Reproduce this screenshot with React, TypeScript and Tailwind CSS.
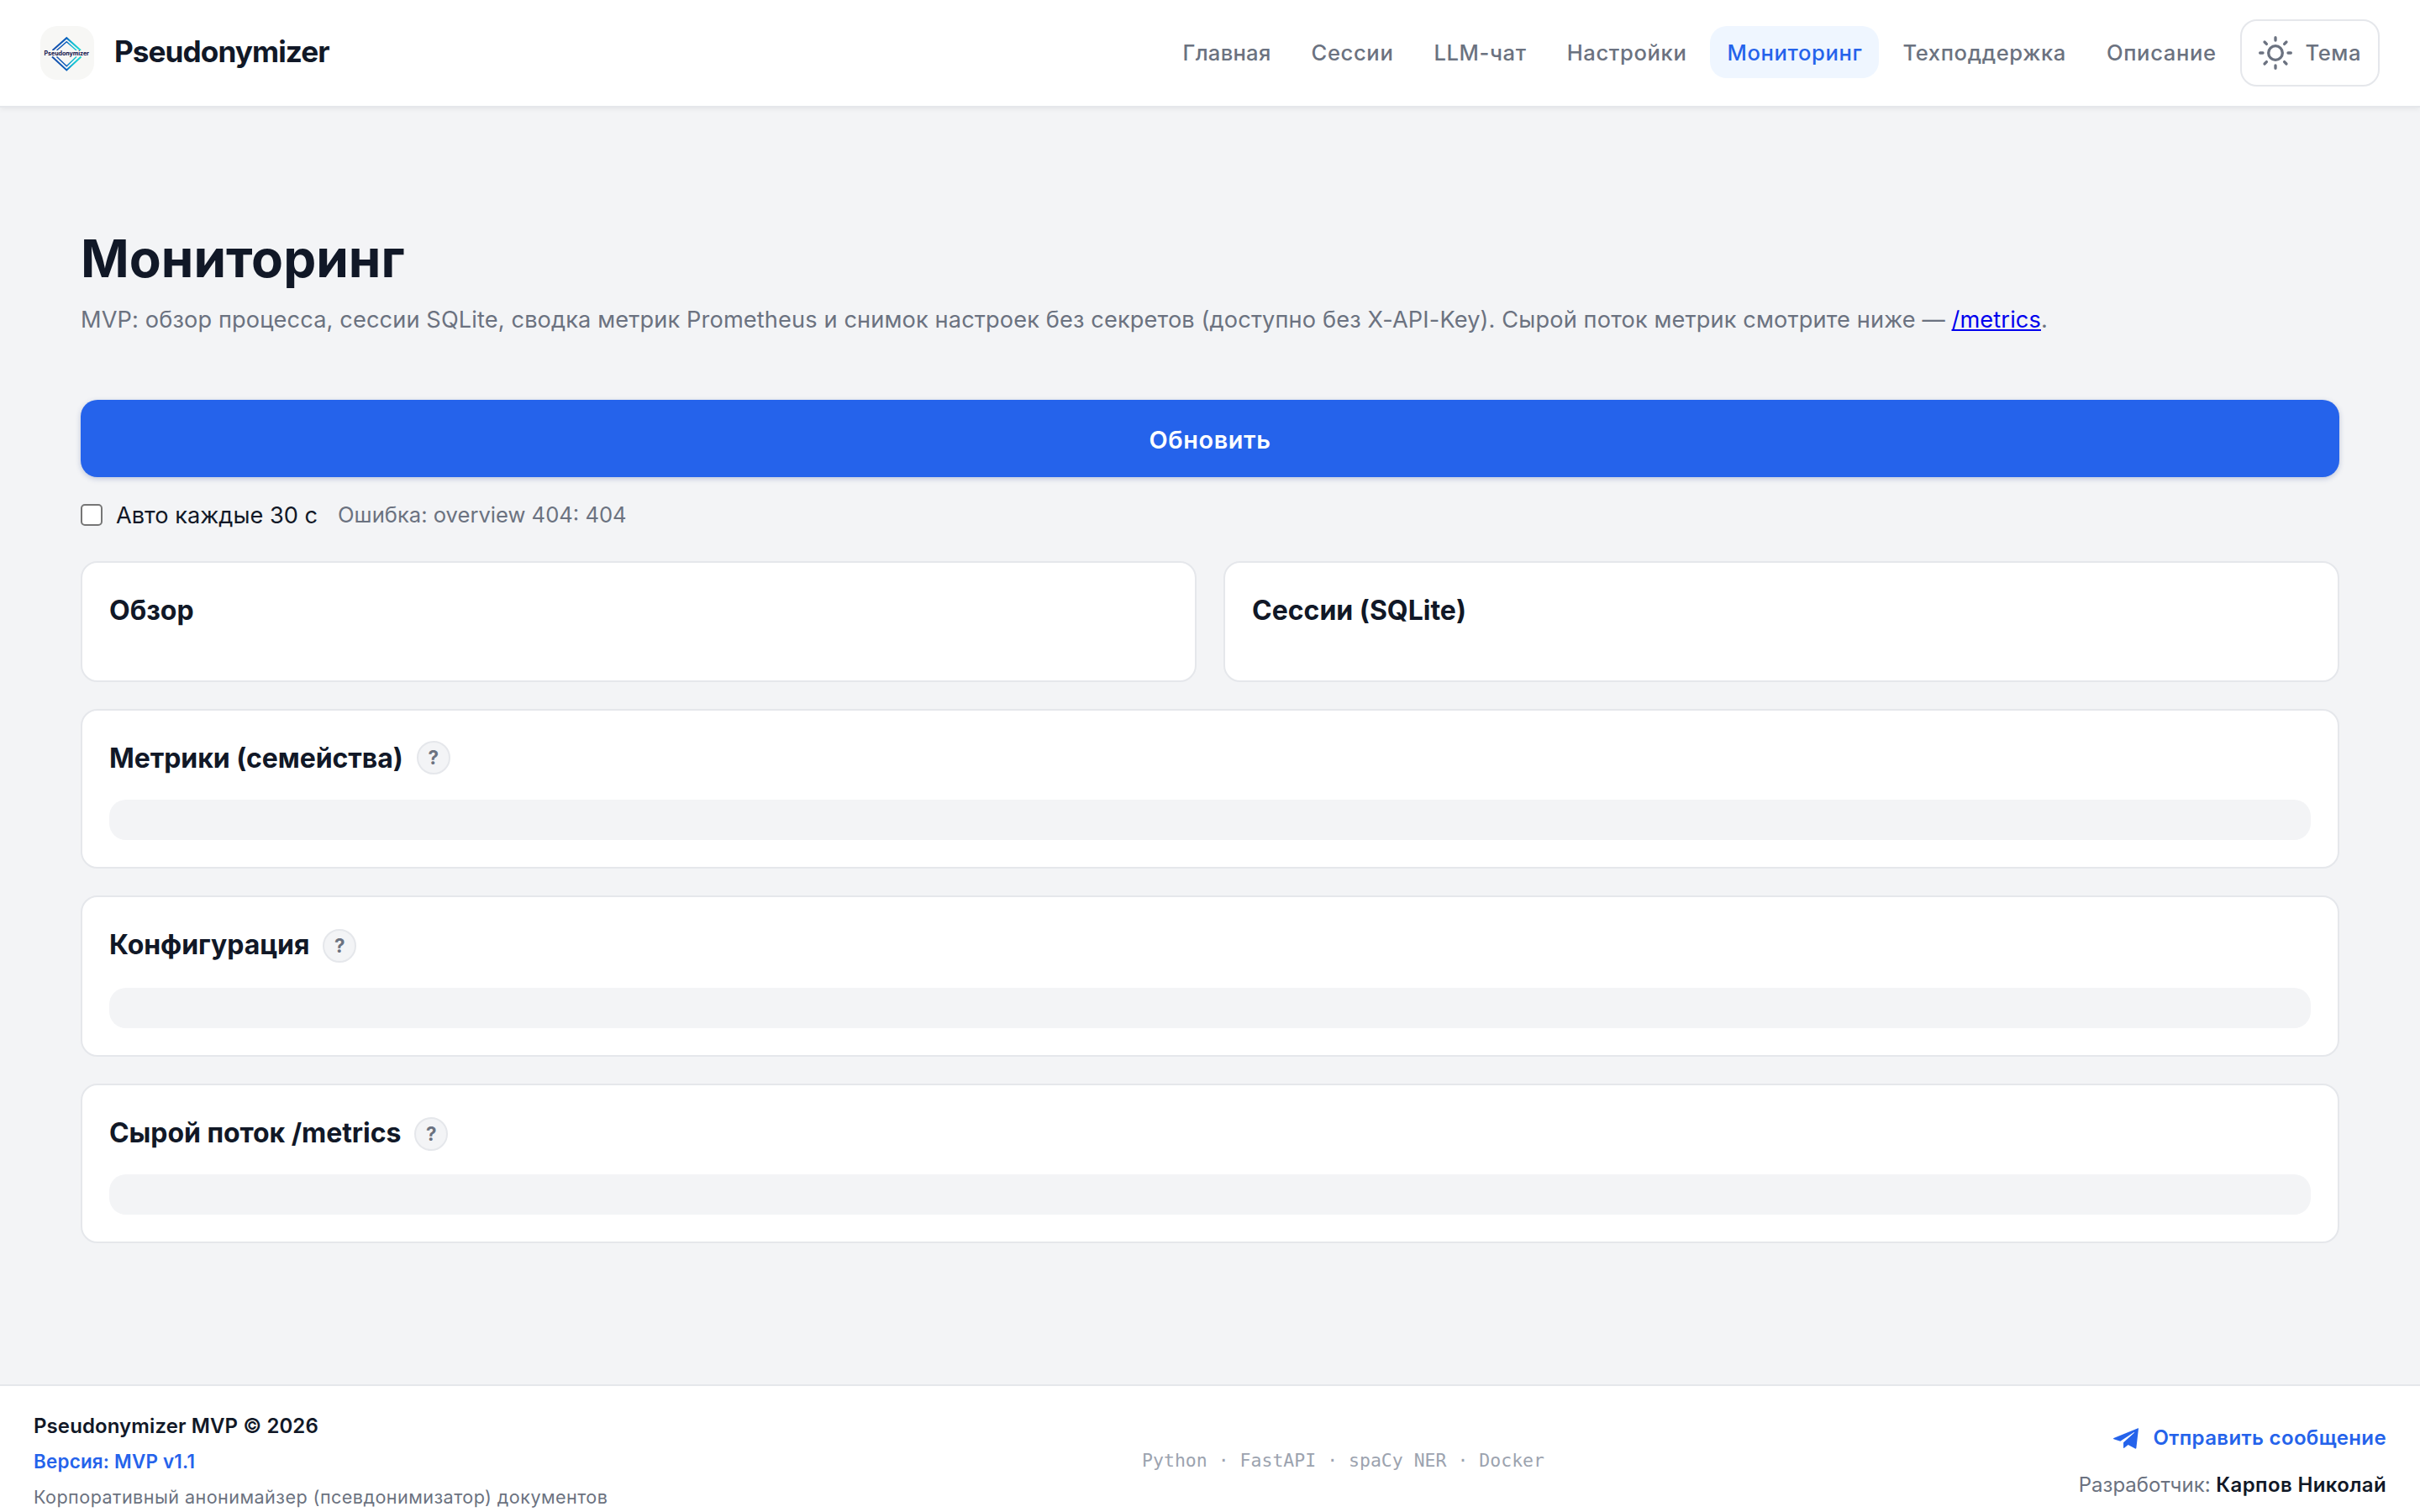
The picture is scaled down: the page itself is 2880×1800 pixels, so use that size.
import React from 'react';

interface NavItem {
  label: string;
  className?: string;
}

const NAV_ITEMS: NavItem[] = [
  { label: 'Главная', className: 'tracking-[0.01em]' },
  { label: 'Сессии' },
  { label: 'LLM-чат' },
  { label: 'Настройки' },
  { label: 'Мониторинг', className: 'rounded-[20px] bg-[#eff6ff] text-[#2563eb]' },
  { label: 'Техподдержка' },
  { label: 'Описание' },
];

function Logo() {
  return (
    <svg viewBox="0 0 64 64" className="w-16 h-16 rounded-[20px]">
      <defs>
        <linearGradient id="edge" x1="10" y1="0" x2="52" y2="0" gradientUnits="userSpaceOnUse">
          <stop offset="0" stopColor="#1d4fa8" />
          <stop offset="0.5" stopColor="#0b5cbc" />
          <stop offset="0.65" stopColor="#14b8d4" />
          <stop offset="1" stopColor="#1fe5cf" />
        </linearGradient>
      </defs>
      <rect width="64" height="64" fill="#f7f7f5" />
      <g fill="none" stroke="url(#edge)" strokeWidth="2">
        <path d="M14.5 29 31.3 14.2 48 29" />
        <path d="M19.5 29 31.3 18.8 43 29" strokeWidth="1.5" />
        <path d="M14 36.5 31.3 52.5 48.5 36.5" />
        <path d="M19.5 36.5 31.3 47.8 43 36.5" strokeWidth="1.5" />
      </g>
      <rect x="4" y="29" width="56" height="6.5" fill="#f7f7f5" />
      <text
        x="4.5"
        y="34.6"
        textLength="53.5"
        className="font-['Inter'] font-bold text-[7.1px] fill-[#10104a]"
      >
        Pseudonymizer
      </text>
    </svg>
  );
}

function SunIcon() {
  return (
    <svg
      viewBox="0 0 24 24"
      fill="none"
      stroke="currentColor"
      strokeWidth="2"
      strokeLinecap="round"
      className="w-10 h-10"
    >
      <circle cx="12" cy="12" r="5" />
      <path d="M12 1v2M12 21v2M4.22 4.22l1.42 1.42M18.36 18.36l1.42 1.42M1 12h2M21 12h2M4.22 19.78l1.42-1.42M18.36 5.64l1.42-1.42" />
    </svg>
  );
}

function PlaneIcon() {
  return (
    <svg viewBox="0 0 90 75" fill="currentColor" className="w-[30px] h-[25px] mx-px">
      <path d="M88.5.8c.9-.3 1.7.4 1.5 1.4L82 72c-.2 2-2.4 2.8-4 1.8L53 60 39 71.5c-1.2 1-2.8.3-2.8-1.2V51.5L74.5 17c1-1.2-.2-2.2-1.5-1.4L25 47 1.5 39.5c-2-.7-2-2.8 0-3.6Z" />
    </svg>
  );
}

function Header() {
  return (
    <header className="flex flex-none items-center justify-between h-32 px-12 bg-white border-b-2 border-[#e5e7eb] shadow-[0_2px_6px_rgba(0,0,0,0.06)]">
      <div className="flex items-center gap-6">
        <Logo />
        <span className="pb-1 text-[35.2px] leading-[52px] font-bold tracking-[-0.027em]">
          Pseudonymizer
        </span>
      </div>
      <nav className="flex items-center gap-2 text-[25.6px] leading-[38px] font-medium tracking-[0.024em] text-[#6b7280]">
        {NAV_ITEMS.map((item) => (
          <a
            key={item.label}
            href="#"
            className={`mb-0.5 px-5 pt-[13px] pb-[11px] ${item.className ?? ''}`}
          >
            {item.label}
          </a>
        ))}
        <button className="flex items-center gap-4 h-20 px-5 border-2 border-[#e5e7eb] rounded-[20px] font-medium tracking-[0.02em]">
          <SunIcon />
          <span>Тема</span>
        </button>
      </nav>
    </header>
  );
}

interface SectionProps {
  title: string;
  hintClass?: string;
  barClass: string;
}

function Section({ title, hintClass = '', barClass }: SectionProps) {
  return (
    <section className="mt-8 p-8 bg-white border-2 border-[#e5e7eb] rounded-[20px]">
      <div className="flex items-center gap-4 h-12">
        <h2 className="pt-0.5 text-[32px] leading-[48px] font-bold tracking-[-0.002em]">{title}</h2>
        <span
          className={`flex items-center justify-center w-10 h-10 rounded-full border-2 border-[#e5e7eb] bg-[#f3f4f6] text-[22.4px] font-bold text-[#6b7280] ${hintClass}`}
        >
          ?
        </span>
      </div>
      <div className={`h-12 rounded-[20px] bg-[#f3f4f6] ${barClass}`} />
    </section>
  );
}

function Footer() {
  return (
    <footer className="flex flex-none items-center justify-between h-[158px] px-10 pt-6 bg-white border-t-2 border-[#e5e7eb]">
      <div className="leading-[42px]">
        <p className="text-[24px] font-semibold tracking-[0.004em]">Pseudonymizer MVP © 2026</p>
        <p className="text-[22.4px] font-semibold text-[#2563eb] tracking-[0.01em]">Версия: MVP v1.1</p>
        <p className="text-[21.6px] text-[#6b7280] tracking-[0.02em]">
          Корпоративный анонимайзер (псевдонимизатор) документов
        </p>
      </div>
      <p className="pb-0.5 font-['DejaVu_Sans_Mono',monospace] text-[21.5px] text-[#9ca3af]">
        Python · FastAPI · spaCy NER · Docker
      </p>
      <div className="flex flex-col items-end text-[24px] leading-[56px]">
        <a href="#" className="flex items-center gap-4 font-semibold tracking-[0.015em] text-[#2563eb]">
          <PlaneIcon />
          Отправить сообщение
        </a>
        <p className="text-[#6b7280]">
          Разработчик:{' '}
          <span className="font-semibold tracking-[0.015em] text-[#111827]">Карпов Николай</span>
        </p>
      </div>
    </footer>
  );
}

export default function App() {
  return (
    <div className="flex flex-col h-[1800px] overflow-hidden bg-[#f3f4f6] font-['Inter',sans-serif] text-[#111827]">
      <Header />
      <main className="flex-none h-[1520px] px-24 pt-[142px]">
        <h1 className="text-[62px] leading-[76px] font-bold">Мониторинг</h1>
        <p className="mt-[13px] text-[27.2px] leading-[44px] tracking-[0.0045em] text-[#6b7280]">
          MVP: обзор процесса, сессии SQLite, сводка метрик Prometheus и снимок настроек без секретов
          (доступно без X-API-Key). Сырой поток метрик смотрите ниже —{' '}
          <a href="#" className="text-[#0000ee] underline">/metrics</a>.
        </p>
        <button className="mt-[73px] w-full h-[92px] pt-[3px] rounded-[20px] bg-[#2563eb] text-white text-[28.8px] font-semibold tracking-[0.022em] shadow-[0_2px_6px_rgba(30,58,138,0.25)]">
          Обновить
        </button>
        <div className="flex items-center h-[50px] mt-5">
          <label className="flex items-center gap-4">
            <input
              type="checkbox"
              className="appearance-none w-[26px] h-[26px] rounded-[5px] border-2 border-[#767676] bg-white"
            />
            <span className="pt-[3px] text-[27.2px]">Авто каждые 30 с</span>
          </label>
          <span className="ml-6 text-[25.6px] text-[#6b7280]">Ошибка: overview 404: 404</span>
        </div>
        <div className="grid grid-cols-2 gap-8 mt-[30px]">
          {['Обзор', 'Сессии (SQLite)'].map((title) => (
            <section key={title} className="h-36 p-8 bg-white border-2 border-[#e5e7eb] rounded-[20px]">
              <h2 className="pt-px text-[32px] leading-[48px] font-bold">{title}</h2>
            </section>
          ))}
        </div>
        <Section title="Метрики (семейства)" barClass="mt-[26px]" />
        <Section title="Конфигурация" hintClass="mt-1" barClass="mt-7" />
        <Section title="Сырой поток /metrics" hintClass="mt-1" barClass="mt-[26px]" />
      </main>
      <Footer />
    </div>
  );
}
